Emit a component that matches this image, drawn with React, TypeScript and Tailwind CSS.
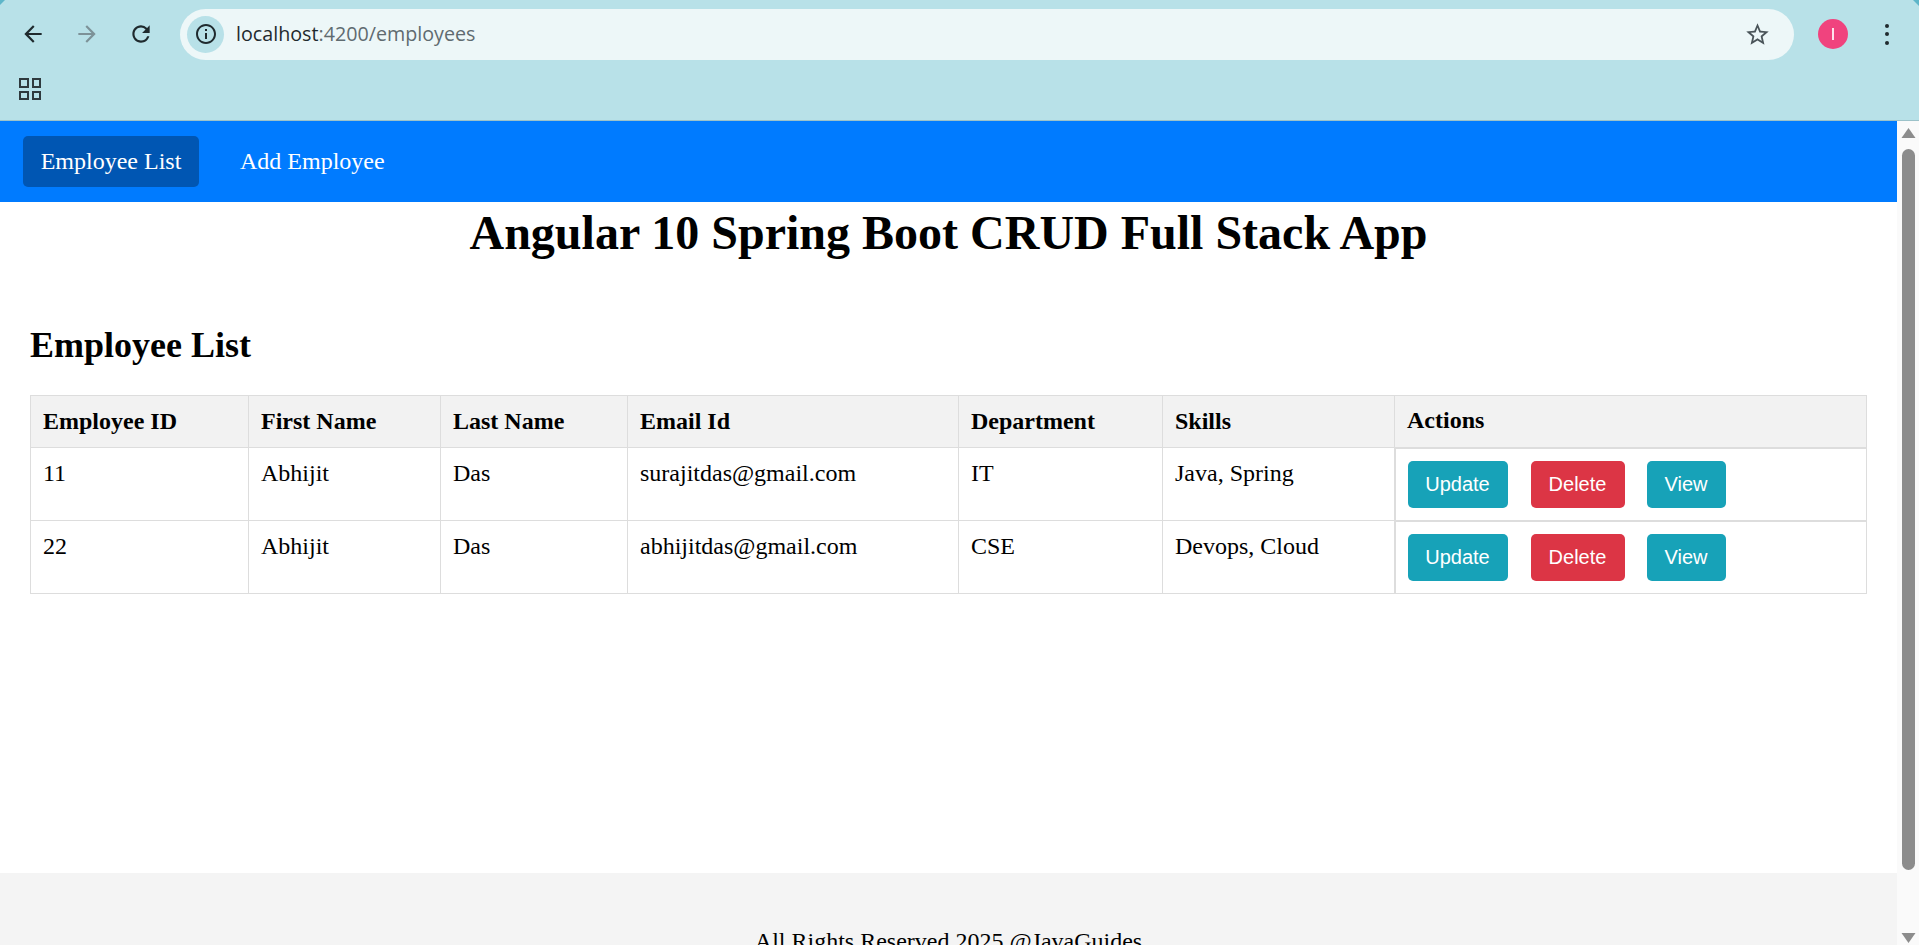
const employees = [
  { id: 11, first: "Abhijit", last: "Das", email: "surajitdas@gmail.com", dept: "IT", skills: "Java, Spring" },
  { id: 22, first: "Abhijit", last: "Das", email: "abhijitdas@gmail.com", dept: "CSE", skills: "Devops, Cloud" },
]

const headers = ["Employee ID", "First Name", "Last Name", "Email Id", "Department", "Skills", "Actions"]

function ActionButton({ label, className }: { label: string; className: string }) {
  return (
    <button className={`h-[47px] rounded-[5px] text-white text-[20px] font-['Liberation_Sans',sans-serif] ${className}`}>
      {label}
    </button>
  )
}

function BrowserBar() {
  return (
    <div className="h-[121px] bg-[#b8e1e8] border-b border-[#9cc2c9] flex flex-col relative shrink-0">
      <div className="absolute left-0 top-0 w-[5px] h-[5px] bg-[#5eb6c9] [clip-path:polygon(0_0,100%_0,0_100%)]" />
      <div className="absolute right-0 top-0 w-[6px] h-[6px] bg-[#5eb6c9] [clip-path:polygon(0_0,100%_0,100%_100%)]" />
      <div className="h-[68px] flex items-center">
        <svg viewBox="0 0 24 24" className="w-[26px] h-[26px] ml-[20px] fill-[#1f2a2e]">
          <path d="M20 11H7.83l5.59-5.59L12 4l-8 8 8 8 1.41-1.41L7.83 13H20v-2z" />
        </svg>
        <svg viewBox="0 0 24 24" className="w-[26px] h-[26px] ml-[28px] fill-[#7d9298]">
          <path d="M4 11h12.17l-5.59-5.59L12 4l8 8-8 8-1.41-1.41L16.17 13H4v-2z" />
        </svg>
        <svg viewBox="0 0 24 24" className="w-[26px] h-[26px] ml-[28px] fill-[#1f2a2e]">
          <path d="M17.65 6.35A7.958 7.958 0 0012 4c-4.42 0-7.99 3.58-7.99 8s3.57 8 7.99 8c3.73 0 6.84-2.55 7.73-6h-2.08A5.99 5.99 0 0112 18c-3.31 0-6-2.69-6-6s2.69-6 6-6c1.66 0 3.14.69 4.22 1.78L13 11h7V4l-2.35 2.35z" />
        </svg>
        <div className="ml-[26px] w-[1614px] h-[51px] rounded-full bg-[#edf7f8] flex items-center pl-[7px] pr-[23px]">
          <div className="w-[37px] h-[37px] rounded-full bg-[#b8e1e8] flex items-center justify-center">
            <svg viewBox="0 0 24 24" className="w-[24px] h-[24px] fill-[#1f2a2e]">
              <path d="M11 7h2v2h-2V7zm0 4h2v6h-2v-6zm1-9C6.48 2 2 6.48 2 12s4.48 10 10 10 10-4.48 10-10S17.52 2 12 2zm0 18c-4.41 0-8-3.59-8-8s3.59-8 8-8 8 3.59 8 8-3.59 8-8 8z" />
            </svg>
          </div>
          <span className="ml-[12px] text-[19.7px] font-['Open_Sans',sans-serif] text-[#1f2a2e] flex-1">
            localhost<span className="text-[#5f6b70]">:4200/employees</span>
          </span>
          <svg viewBox="0 0 24 24" className="w-[27px] h-[27px] fill-[#4a5459]">
            <path d="M22 9.24l-7.19-.62L12 2 9.19 8.63 2 9.24l5.46 4.73L5.82 21 12 17.27 18.18 21l-1.63-7.03L22 9.24zM12 15.4l-3.76 2.27 1-4.28-3.32-2.88 4.38-.38L12 6.1l1.71 4.04 4.38.38-3.32 2.88 1 4.28L12 15.4z" />
          </svg>
        </div>
        <div className="ml-[24px] w-[30px] h-[30px] rounded-full bg-[#f0437e] flex items-center justify-center">
          <div className="w-[1.5px] h-[12px] bg-[#fde3ec]" />
        </div>
        <div className="ml-[37px] flex flex-col gap-[4.5px]">
          <div className="w-[4px] h-[4px] rounded-full bg-[#1f2a2e]" />
          <div className="w-[4px] h-[4px] rounded-full bg-[#1f2a2e]" />
          <div className="w-[4px] h-[4px] rounded-full bg-[#1f2a2e]" />
        </div>
      </div>
      <div className="flex-1 flex pl-[19px] pt-[10px]">
        <div className="w-[22px] h-[22px] grid grid-cols-2 gap-[3px]">
          <div className="border-[2.5px] border-[#2f3a3e]" />
          <div className="border-[2.5px] border-[#2f3a3e]" />
          <div className="border-[2.5px] border-[#2f3a3e]" />
          <div className="border-[2.5px] border-[#2f3a3e]" />
        </div>
      </div>
    </div>
  )
}

function Scrollbar() {
  return (
    <div className="w-[22px] bg-[#fafafa] flex flex-col items-center shrink-0">
      <svg viewBox="0 0 14 10" className="w-[15px] h-[10px] mt-[7px] fill-[#8c8c8c]">
        <path d="M7 0l7 10H0z" />
      </svg>
      <div className="w-[13px] h-[721px] mt-[11px] rounded-full bg-[#8c8c8c]" />
      <svg viewBox="0 0 14 10" className="w-[15px] h-[10px] mt-[63px] fill-[#8c8c8c]">
        <path d="M0 0h14L7 10z" />
      </svg>
    </div>
  )
}

export default function App() {
  return (
    <div className="h-[945px] w-full overflow-hidden flex flex-col bg-white text-black font-['Liberation_Serif',serif]">
      <BrowserBar />
      <div className="flex-1 flex min-h-0">
        <div className="flex-1 min-w-0 flex flex-col">
          <nav className="h-[81px] bg-[#007bff] flex items-center pl-[23px] gap-[24px] shrink-0">
            <a className="h-[51px] w-[176px] pb-[2px] rounded-[5px] bg-[#0056b3] text-white text-[24px] flex items-center justify-center">
              Employee List
            </a>
            <a className="px-[17px] pb-[2px] text-white text-[24px]">Add Employee</a>
          </nav>
          <main className="h-[671px] px-[30px] shrink-0">
            <h1 className="text-[48px] font-bold text-center leading-[60px] pt-[1px]">
              Angular 10 Spring Boot CRUD Full Stack App
            </h1>
            <h2 className="text-[36px] font-bold leading-[42px] mt-[61px]">Employee List</h2>
            <table className="mt-[29px] w-[1837px] table-fixed border-collapse text-[24px] leading-[30px]">
              <colgroup>
                <col className="w-[218px]" />
                <col className="w-[192px]" />
                <col className="w-[187px]" />
                <col className="w-[331px]" />
                <col className="w-[204px]" />
                <col className="w-[232px]" />
                <col />
              </colgroup>
              <thead>
                <tr className="h-[52px] bg-[#f2f2f2]">
                  {headers.map((h) => (
                    <th key={h} className="border border-[#ddd] px-[12px] pb-[2px] text-left font-bold">
                      {h}
                    </th>
                  ))}
                </tr>
              </thead>
              <tbody>
                {employees.map((emp) => (
                  <tr key={emp.id} className="h-[73px]">
                    {[emp.id, emp.first, emp.last, emp.email, emp.dept, emp.skills].map((val, i) => (
                      <td key={i} className="border border-[#ddd] px-[12px] pt-[10px] align-top">
                        {val}
                      </td>
                    ))}
                    <td className="border border-[#ddd] border-t-2 border-l-2 px-[12px] align-middle">
                      <div className="flex">
                        <ActionButton label="Update" className="w-[100px] bg-[#17a2b8]" />
                        <ActionButton label="Delete" className="w-[94px] ml-[23px] bg-[#dc3545]" />
                        <ActionButton label="View" className="w-[79px] ml-[22px] bg-[#17a2b8]" />
                      </div>
                    </td>
                  </tr>
                ))}
              </tbody>
            </table>
          </main>
          <footer className="flex-1 bg-[#f4f4f4] text-center text-[24px] pt-[50px]">
            All Rights Reserved 2025 @JavaGuides
          </footer>
        </div>
        <Scrollbar />
      </div>
    </div>
  )
}
